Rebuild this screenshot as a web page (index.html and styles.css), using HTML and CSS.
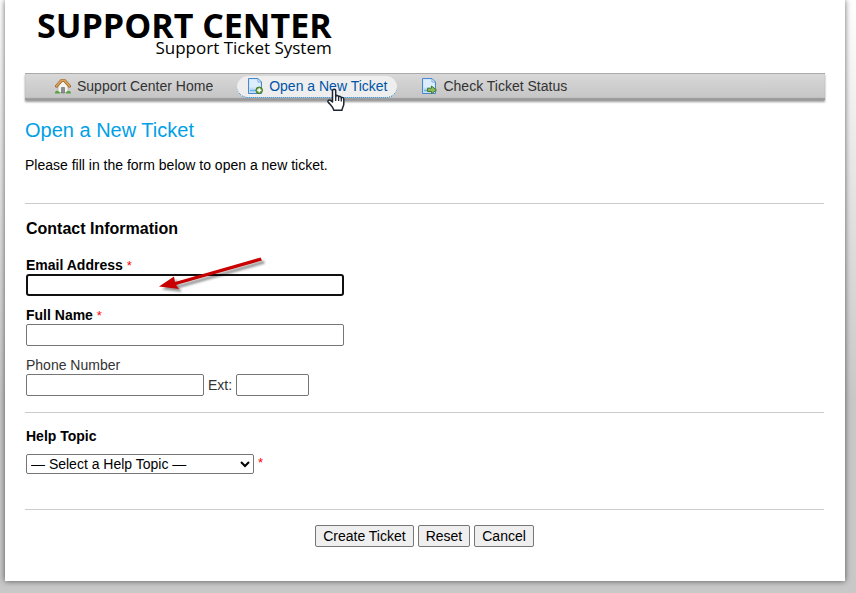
FILE: index.html
```html
<!DOCTYPE html>
<html lang="en">
<head>
<meta charset="utf-8">
<title>Open a New Ticket</title>
<link rel="stylesheet" href="styles.css">
</head>
<body>
<div class="container">
  <header class="header">
    <a class="logo" href="#">
      <span class="logo-title">SUPPORT CENTER</span>
      <span class="logo-subtitle">Support Ticket System</span>
    </a>
  </header>
  <nav class="nav">
    <a class="nav-link" href="#">
      <svg class="icon" viewBox="0 0 16 16" aria-hidden="true">
        <path d="M3 8v6.500h10V8L8 3z" fill="#f5f3ee" stroke="#b8b0a0" stroke-width=".8"/>
        <path d="M6.500 15V9.500h3V15z" fill="#8b8f94" stroke="#666" stroke-width=".6"/>
        <path d="M1.500 8.200 6.500 2.500h3l5 5.700" fill="none" stroke="#9a6527" stroke-width="3" stroke-linecap="round" stroke-linejoin="round"/>
        <path d="M1.600 8 6.500 2.400h3L14.400 8" fill="none" stroke="#dda260" stroke-width="1.700" stroke-linecap="round" stroke-linejoin="round"/>
        <path d="M0 15.500c0-2 1-3 2.500-2.500 1.500 0 2.500 1 2.500 2.500zM11 15.500c0-2 1-2.500 2.500-2.500S16 13.500 16 15.500z" fill="#55a344"/>
      </svg>
      Support Center Home
    </a>
    <a class="nav-link active" href="#">
      <svg class="icon" viewBox="0 0 16 16" aria-hidden="true">
        <path d="M1.500.5h9.500l3.500 3.500v11.500h-13z" fill="#c4dff8" stroke="#4b87cb"/>
        <path d="M2.500 1.500h8v3h3v5h-11z" fill="#dceefd"/>
        <path d="M11 .8V4h3.200z" fill="#fff" stroke="#6ba0d8" stroke-width=".8"/>
        <path d="M3 12.500h6" stroke="#68b2ef" stroke-width="1.500"/>
        <circle cx="12.200" cy="12.300" r="3.300" fill="#78a947" stroke="#44782a"/>
        <path d="M12.200 10.300v4M10.200 12.300h4" stroke="#fff" stroke-width="1.400"/>
      </svg>
      Open a New Ticket
      <svg class="pointer" viewBox="0 0 18 24" aria-hidden="true">
        <path d="M5.500 14V3.200C5.500.6 8.700.6 8.700 3.200V8.500c.4-1.400 2.900-1.200 2.900.5.500-1.100 2.700-.7 2.700.9.700-.8 2.500-.3 2.500 1.300V16c0 2.500-1.800 3.500-1.800 6.300H6.700C6.500 19.500 3.500 17 1.300 14.200c-1.100-1.500.7-2.900 2.200-1.800z" fill="#fff" stroke="#1c2433" stroke-width="1.500" stroke-linejoin="round"/>
        <path d="M8.700 8.500v4.500M11.600 9V13M14.300 10V13.500" stroke="#1c2433" stroke-width="1.300"/>
      </svg>
    </a>
    <a class="nav-link" href="#">
      <svg class="icon" viewBox="0 0 16 16" aria-hidden="true">
        <path d="M1.500.5h9.500l3.500 3.500v11.500h-13z" fill="#c4dff8" stroke="#4b87cb"/>
        <path d="M2.500 1.500h8v3h3v5h-11z" fill="#dceefd"/>
        <path d="M11 .8V4h3.200z" fill="#fff" stroke="#6ba0d8" stroke-width=".8"/>
        <path d="M3 12.500h4" stroke="#68b2ef" stroke-width="1.500"/>
        <path d="M6.500 10.200h4V8l5 4-5 3.800v-2.300h-4z" fill="#8cba5b" stroke="#447c28" stroke-linejoin="round"/>
      </svg>
      Check Ticket Status
    </a>
  </nav>
  <main class="content">
    <h1>Open a New Ticket</h1>
    <p class="intro">Please fill in the form below to open a new ticket.</p>
    <form>
      <section class="section contact">
        <h2>Contact Information</h2>
        <div class="field">
          <label class="required" for="email">Email Address <span class="star">*</span></label>
          <input class="focused" id="email" type="email">
          <svg class="arrow" viewBox="0 0 110 40" aria-hidden="true">
            <g class="arrow-shape">
              <path d="M104.500 6.500 106 9.500 20 34 23 38 3 35.500 18 25.500 19 31z" fill="#c80000"/>
            </g>
          </svg>
        </div>
        <div class="field">
          <label class="required" for="name">Full Name <span class="star">*</span></label>
          <input id="name" type="text">
        </div>
        <div class="field">
          <label for="phone">Phone Number</label>
          <div class="phone-row">
            <input class="phone" id="phone" type="tel">
            <label for="ext">Ext:</label>
            <input class="ext" id="ext" type="text">
          </div>
        </div>
      </section>
      <section class="section topic">
        <h3><label for="topic">Help Topic</label></h3>
        <div class="topic-row">
          <select id="topic"><option>— Select a Help Topic —</option></select>
          <span class="star">*</span>
        </div>
      </section>
      <div class="section buttons">
        <button type="submit">Create Ticket</button>
        <button type="reset">Reset</button>
        <button type="button">Cancel</button>
      </div>
    </form>
  </main>
</div>
</body>
</html>
```
FILE: styles.css
```css
* {
  box-sizing: border-box;
}

html {
  min-height: 100%;
  background: #c8c8c8 linear-gradient(#fff, #c8c8c8 400px) no-repeat;
}

body {
  margin: 0;
  font: 14px/20px "Liberation Sans", Arial, sans-serif;
  color: #000;
}

.container {
  margin: 0 11px 12px 5px;
  padding: 0 20px 34px;
  background: #fff;
  box-shadow: 0 0 6px rgba(0, 0, 0, 0.6);
}

.header {
  display: flex;
  height: 73px;
  padding: 9px 0 0 12px;
}

.logo {
  display: flex;
  flex-direction: column;
  align-items: flex-end;
  color: #000;
  text-decoration: none;
  font-family: "Open Sans", "Noto Sans", sans-serif;
}

.logo-title {
  font-size: 34px;
  line-height: 32px;
  font-weight: 700;
}

.logo-subtitle {
  font-size: 17px;
  line-height: 14px;
}

.nav {
  display: flex;
  gap: 14px;
  padding: 2px 20px;
  border-top: 1px solid #aaa;
  background: linear-gradient(#d8d8d8, #c4c4c4);
  box-shadow: inset 0 -2px 1px #999, 0 2px 2px rgba(0, 0, 0, 0.4);
}

.nav-link {
  position: relative;
  display: flex;
  align-items: center;
  gap: 6px;
  height: 22px;
  padding: 0 10px 2px;
  border-bottom: 1px solid transparent;
  border-radius: 11px;
  line-height: 18px;
  color: #333;
  text-decoration: none;
}

.nav-link.active {
  background: #eee;
  color: #0054a6;
  border-bottom: 1px dotted #0072bc;
}

.icon {
  width: 16px;
  height: 16px;
}

.pointer {
  position: absolute;
  z-index: 1;
  left: 90px;
  top: 12px;
  width: 18px;
  height: 24px;
}

h1 {
  margin: 18px 0 13px;
  font-size: 20px;
  line-height: 24px;
  font-weight: 400;
  color: #00a0e6;
}

.intro {
  margin: 0 0 28px;
}

.section {
  margin-right: 1px;
  border-top: 1px solid #ccc;
}

.contact {
  padding: 15px 0 16px 1px;
}

h2 {
  margin: 0 0 18px;
  font-size: 16px;
  line-height: 20px;
}

.field {
  position: relative;
  margin-bottom: 11px;
}

.field:last-child {
  margin-bottom: 0;
}

.field label {
  display: block;
  line-height: 17px;
  color: #333;
}

.field .required {
  font-weight: 700;
  color: #000;
}

.star {
  font-size: 13px;
  line-height: 17px;
  font-weight: 400;
  color: #f00;
}

input {
  display: block;
  width: 318px;
  height: 22px;
  padding: 1px 2px;
  border: 1px solid #767676;
  border-radius: 2px;
  background: #fff;
  font: inherit;
}

.focused {
  border: 2px solid #101010;
  border-radius: 3px;
}

.phone-row {
  display: flex;
  align-items: center;
  gap: 4px;
}

.phone {
  width: 178px;
}

.ext {
  width: 73px;
}

.arrow {
  position: absolute;
  left: 130px;
  top: -6px;
  width: 110px;
  height: 40px;
  overflow: visible;
  pointer-events: none;
}

.arrow-shape {
  filter: drop-shadow(3px 3px 1px rgba(0, 0, 0, 0.4));
}

.topic {
  padding: 13px 0 35px 1px;
}

h3 {
  margin: 0 0 8px;
  font-size: 14px;
  line-height: 20px;
}

.topic-row {
  display: flex;
  gap: 4px;
}

select {
  width: 228px;
  height: 20px;
  border: 1px solid #767676;
  border-radius: 2px;
  background: #fff;
  color: #000;
  font: inherit;
}

.buttons {
  display: flex;
  justify-content: center;
  gap: 4px;
  padding-top: 15px;
}

button {
  height: 22px;
  padding: 0 7px;
  border: 1px solid #767676;
  border-radius: 2px;
  background: #efefef;
  color: #000;
  font: inherit;
}
```
